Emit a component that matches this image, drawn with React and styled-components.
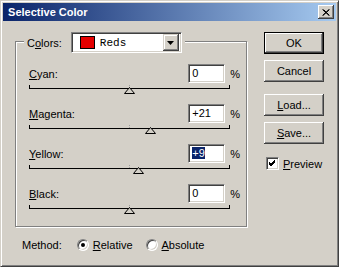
import React from 'react';
import styled, { createGlobalStyle } from 'styled-components';

const GlobalStyle = createGlobalStyle`
  html, body {
    margin: 0;
    padding: 0;
    background: #d4d0c8;
  }
  body {
    font-family: "Liberation Sans", Arial, sans-serif;
    font-size: 11px;
    color: #000;
  }
`;

const Window = styled.div`
  width: 339px;
  height: 267px;
  box-sizing: border-box;
  background: #d4d0c8;
  border: 1px solid;
  border-color: #d4d0c8 #404040 #404040 #d4d0c8;
  box-shadow: inset 1px 1px #fff, inset -1px -1px #808080;
  padding: 2px;
  display: flex;
  flex-direction: column;
`;

const TitleBar = styled.div`
  height: 18px;
  display: flex;
  align-items: center;
  padding: 0 2px 0 2px;
  background: linear-gradient(to right, #0a246a, #a6caf0);
`;

const Title = styled.span`
  color: #fff;
  font-weight: bold;
  font-size: 11px;
  margin-left: 0;
`;

const CloseButton = styled.div`
  margin-left: auto;
  width: 16px;
  height: 14px;
  box-sizing: border-box;
  background: #d4d0c8;
  box-shadow: inset -1px -1px #404040, inset 1px 1px #fff, inset -2px -2px #808080, inset 2px 2px #d4d0c8;
  display: flex;
  align-items: center;
  justify-content: center;
`;

const Body = styled.div`
  display: flex;
  padding: 11px 0 0 12px;
`;

const LeftCol = styled.div`
  width: 232px;
  display: flex;
  flex-direction: column;
  margin-top: 9px;
`;

const GroupBox = styled.div`
  box-sizing: border-box;
  width: 232px;
  border: 1px solid #808080;
  box-shadow: 1px 1px 0 #fff, inset 1px 1px 0 #fff;
  padding: 0 6px 2px 13px;
  display: flex;
  flex-direction: column;
`;

const GroupHeader = styled.div`
  align-self: flex-start;
  display: flex;
  align-items: center;
  gap: 9px;
  margin: -10px 0 0 -5px;
  padding: 0 3px;
  background: #d4d0c8;
`;

const Sunken = styled.div`
  box-sizing: border-box;
  border: 1px solid;
  border-color: #808080 #fff #fff #808080;
  box-shadow: inset 1px 1px #404040, inset -1px -1px #d4d0c8;
  background: #fff;
`;

const Select = styled(Sunken)`
  width: 111px;
  height: 21px;
  display: flex;
  align-items: center;
  padding: 2px;
`;

const Swatch = styled.div`
  width: 15px;
  height: 13px;
  box-sizing: border-box;
  background: #e40000;
  border: 1px solid #000;
  margin-left: 6px;
`;

const SelectText = styled.span`
  font-family: "Liberation Mono", "Courier New", monospace;
  font-size: 11px;
  margin-left: 5px;
  flex: 1;
`;

const ArrowButton = styled.div`
  width: 16px;
  height: 17px;
  box-sizing: border-box;
  background: #d4d0c8;
  box-shadow: inset -1px -1px #404040, inset 1px 1px #d4d0c8, inset -2px -2px #808080, inset 2px 2px #fff;
  display: flex;
  align-items: center;
  justify-content: center;
`;

const ChannelRow = styled.div`
  display: flex;
  align-items: center;
  height: 19px;
  margin-top: ${p => (p.$first ? '11px' : '0')};
`;

const Label = styled.span`
  flex: 1;
  padding-top: 1px;
`;

const Key = styled.span`
  text-decoration: underline;
  text-underline-offset: 1px;
`;

const ValueBox = styled(Sunken)`
  width: 37px;
  height: 19px;
  padding: 2px 0 0 3px;
  line-height: 13px;
`;

const Selected = styled.span`
  background: #0a246a;
  color: #fff;
`;

const Percent = styled.span`
  margin-left: 5px;
`;

const Slider = styled.div`
  position: relative;
  height: 21px;
`;

const Track = styled.div`
  margin-top: 2px;
  width: 199px;
  height: 3px;
  border: 1px solid #000;
  border-top: none;
  position: relative;

  &::after {
    content: '';
    position: absolute;
    left: 99px;
    top: 0;
    height: 3px;
    border-left: 1px dotted #a0a0a0;
  }
`;

const Thumb = styled.svg`
  position: absolute;
  top: 4px;
`;

const MethodRow = styled.div`
  display: flex;
  align-items: center;
  height: 20px;
  margin-top: 8px;
  padding-left: 7px;
`;

const MethodLabel = styled.span`
  margin-right: 15px;
`;

const Radio = styled.span`
  width: 12px;
  height: 12px;
  box-sizing: border-box;
  border-radius: 50%;
  border: 1px solid;
  border-color: #808080 #fff #fff #808080;
  background: #fff;
  box-shadow: inset 1px 1px #404040, inset -1px -1px #d4d0c8;
  display: flex;
  align-items: center;
  justify-content: center;
  margin-right: 4px;

  &::after {
    content: '';
    width: 4px;
    height: 4px;
    border-radius: 50%;
    background: ${p => (p.$checked ? '#000' : 'transparent')};
  }
`;

const RadioText = styled.span`
  margin-right: 13px;
`;

const RightCol = styled.div`
  display: flex;
  flex-direction: column;
  margin-left: 17px;
`;

const Button = styled.div`
  width: 60px;
  height: 22px;
  box-sizing: border-box;
  display: flex;
  align-items: center;
  justify-content: center;
  background: #d4d0c8;
  margin-top: ${p => p.$gap || 0}px;
  box-shadow: ${p =>
    p.$default
      ? 'inset 0 0 0 1px #000, inset -2px -2px #404040, inset 2px 2px #fff, inset -3px -3px #808080'
      : 'inset -1px -1px #404040, inset 1px 1px #fff, inset -2px -2px #808080'};
`;

const CheckRow = styled.div`
  display: flex;
  align-items: center;
  margin-top: 13px;
  margin-left: 2px;
`;

const CheckBox = styled(Sunken)`
  width: 13px;
  height: 13px;
  display: flex;
  align-items: center;
  justify-content: center;
  margin-right: 4px;
`;

const channels = [
  { key: 'C', rest: 'yan:', value: 0 },
  { key: 'M', rest: 'agenta:', value: 21 },
  { key: 'Y', rest: 'ellow:', value: 9, selected: true },
  { key: 'B', rest: 'lack:', value: 0 },
];

const fmt = v => (v > 0 ? `+${v}` : `${v}`);

const Channel = ({ ch, first }) => (
  <>
    <ChannelRow $first={first}>
      <Label>
        <Key>{ch.key}</Key>
        {ch.rest}
      </Label>
      <ValueBox>{ch.selected ? <Selected>{fmt(ch.value)}</Selected> : fmt(ch.value)}</ValueBox>
      <Percent>%</Percent>
    </ChannelRow>
    <Slider>
      <Track />
      <Thumb width="11" height="7" viewBox="0 0 11 7" style={{ left: ch.value + 100 - 5 }}>
        <polygon points="5.5,0.5 10.5,6.5 0.5,6.5" fill="#d4d0c8" stroke="#000" strokeWidth="1" />
      </Thumb>
    </Slider>
  </>
);

export default function App() {
  return (
    <>
      <GlobalStyle />
      <Window>
        <TitleBar>
          <Title>&nbsp;Selective Color</Title>
          <CloseButton>
            <svg width="8" height="7" viewBox="0 0 8 7">
              <path d="M0.5 0.5 L7 6.5 M1.5 0.5 L7.5 6.5 M7 0.5 L0.5 6.5 M7.5 0.5 L1 6.5" stroke="#000" strokeWidth="1" />
            </svg>
          </CloseButton>
        </TitleBar>
        <Body>
          <LeftCol>
            <GroupBox>
              <GroupHeader>
                <span>
                  C<Key>o</Key>lors:
                </span>
                <Select>
                  <Swatch />
                  <SelectText>Reds</SelectText>
                  <ArrowButton>
                    <svg width="7" height="4" viewBox="0 0 7 4">
                      <polygon points="0,0 7,0 3.5,4" fill="#000" />
                    </svg>
                  </ArrowButton>
                </Select>
              </GroupHeader>
              {channels.map((ch, i) => (
                <Channel key={ch.key} ch={ch} first={i === 0} />
              ))}
            </GroupBox>
            <MethodRow>
              <MethodLabel>Method:</MethodLabel>
              <Radio $checked />
              <RadioText>
                <Key>R</Key>elative
              </RadioText>
              <Radio />
              <RadioText>
                <Key>A</Key>bsolute
              </RadioText>
            </MethodRow>
          </LeftCol>
          <RightCol>
            <Button $default>OK</Button>
            <Button $gap={6}>Cancel</Button>
            <Button $gap={12}>
              <span>
                <Key>L</Key>oad...
              </span>
            </Button>
            <Button $gap={6}>
              <span>
                <Key>S</Key>ave...
              </span>
            </Button>
            <CheckRow>
              <CheckBox>
                <svg width="7" height="7" viewBox="0 0 7 7">
                  <path d="M0 2 L2 4 L6 0 M0 3 L2 5 L6 1 M0 4 L2 6 L6 2" stroke="#000" strokeWidth="1" fill="none" />
                </svg>
              </CheckBox>
              <span>
                <Key>P</Key>review
              </span>
            </CheckRow>
          </RightCol>
        </Body>
      </Window>
    </>
  );
}
